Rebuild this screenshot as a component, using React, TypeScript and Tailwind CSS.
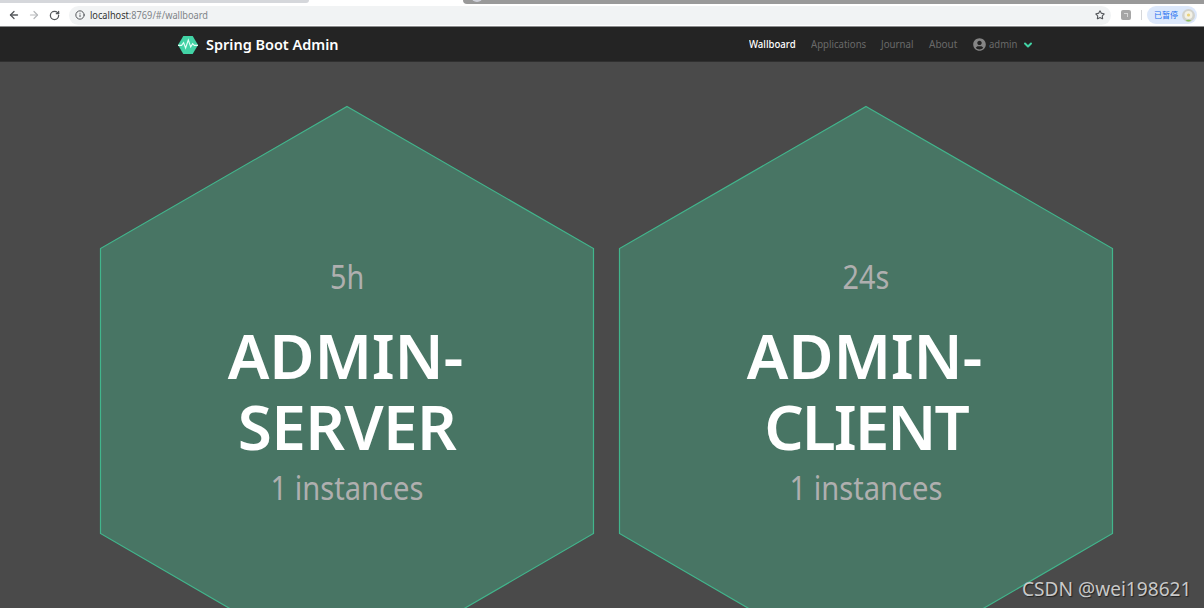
import { ArrowLeft, ArrowRight, ChevronDown, Info, RotateCw, Star } from "lucide-react";

type Application = {
  uptime: string;
  name: string[];
  tracking: string[];
  instances: string;
};

const applications: Application[] = [
  {
    uptime: "5h",
    name: ["ADMIN-", "SERVER"],
    tracking: ["tracking-[-0.2px] -ml-[3px]", "tracking-[-0.6px]"],
    instances: "1 instances",
  },
  {
    uptime: "24s",
    name: ["ADMIN-", "CLIENT"],
    tracking: ["tracking-[-0.2px] -ml-[3px]", "tracking-[-2px]"],
    instances: "1 instances",
  },
];

function BrowserBar() {
  return (
    <div className="h-[27px] shrink-0 bg-white border-b border-[#8b8c8d] flex flex-col">
      <div className="h-1 flex">
        <div className="w-[309px] h-[3px] bg-[#d5d7db] rounded-br" />
        <div className="w-[154px]" />
        <div className="flex-1 h-1 bg-[#999] rounded-bl overflow-hidden pl-2">
          <div className="w-3 h-3 -mt-2.5 rounded-full bg-[#ced0d8]" />
        </div>
      </div>
      <div className="flex-1 flex items-center text-[#55585c]">
        <ArrowLeft className="ml-2 size-3" strokeWidth={2.6} />
        <ArrowRight className="ml-2 size-3 text-[#b5b7ba]" strokeWidth={2.4} />
        <RotateCw className="ml-[9px] size-[11px]" strokeWidth={2.8} />
        <div className="ml-[9px] w-[1042px] h-[19px] rounded-full bg-[#f1f3f4] flex items-center pl-1.5 pr-1.5">
          <Info className="size-2.5" strokeWidth={2.4} />
          <span className="ml-[5px] text-[10px] leading-none text-[#808488] origin-left scale-x-[0.92]">
            <span className="text-[#333]">localhost</span>:8769/#/wallboard
          </span>
          <Star className="ml-auto size-2.5" strokeWidth={2.6} />
        </div>
        <div className="ml-2.5 size-2.5 rounded-xs bg-[#a6a6a6] flex items-center justify-center">
          <div className="size-1 border-t border-r border-[#d8d8d8]" />
        </div>
        <div className="ml-[10px] w-px h-2.5 bg-[#d5d7da]" />
        <div className="ml-[5px] w-[50px] h-[18px] rounded-full bg-[#dce8fb] flex items-center pl-[7px]">
          <span className="text-[8px] leading-none text-[#1a6ff0] w-[24px] whitespace-nowrap">已暂停</span>
          <svg className="ml-1 size-[13px]" viewBox="0 0 13 13">
            <circle cx="6.5" cy="6.5" r="6.5" fill="#d1d2cd" />
            <circle cx="6.5" cy="6" r="4" fill="#f3f1e5" />
            <circle cx="6.5" cy="6" r="1.6" fill="#ead27a" />
            <path d="M3.5 11.7q3-1.7 6 0-3 1.4-6 0z" fill="#8cc05f" />
          </svg>
        </div>
      </div>
    </div>
  );
}

function Navbar() {
  return (
    <nav className="h-[35px] shrink-0 bg-[#242424] border-b border-[#303030] flex items-center pt-px text-[#6a6a6a] text-[10px]">
      <svg className="ml-[178px] w-5 h-[18px]" viewBox="0 0 20 18">
        <path d="M5.3 0h9.4L20 9l-5.3 9H5.3L0 9z" fill="#42d3a5" />
        <path
          d="M0 9.4h3.600l2-2.800 2 5.400L10.300 4l2.400 7 1.900-3.300 1.700 1.700H20"
          fill="none"
          stroke="#e4fff6"
          strokeWidth="1.1"
        />
      </svg>
      <span className="ml-2 w-[543px] text-[15px] leading-none font-semibold text-white whitespace-nowrap origin-left scale-x-[0.965]">
        Spring Boot Admin
      </span>
      <span className="w-[62px] text-white font-medium origin-left scale-x-[0.96]">Wallboard</span>
      <span className="w-[70px] origin-left scale-x-[0.96]">Applications</span>
      <span className="w-[48px] origin-left scale-x-[0.97]">Journal</span>
      <span className="w-[44px]">About</span>
      <svg className="size-[13px]" viewBox="0 0 496 512" fill="#858585">
        <path d="M248 8C111 8 0 119 0 256s111 248 248 248 248-111 248-248S385 8 248 8zm0 96c48.600 0 88 39.400 88 88s-39.400 88-88 88-88-39.400-88-88 39.400-88 88-88zm0 344c-58.700 0-111.300-26.600-146.500-68.200 18.800-35.400 55.600-59.800 98.500-59.800 2.400 0 4.800.4 7.100 1.100 13 4.200 26.600 6.900 40.900 6.900s28-2.700 40.900-6.900c2.300-.7 4.700-1.100 7.100-1.100 42.900 0 79.700 24.400 98.500 59.800C359.300 421.400 306.700 448 248 448z" />
      </svg>
      <span className="ml-[3px] w-[34px] origin-left scale-x-[0.95]">admin</span>
      <ChevronDown className="size-3 -ml-px text-[#42d3a5]" strokeWidth={4} />
    </nav>
  );
}

function HexagonTile({ app }: { app: Application }) {
  return (
    <div className="relative w-[494px] h-[571px] shrink-0">
      <svg className="absolute inset-0 overflow-visible" width="494" height="571" viewBox="0 0 494 571">
        <path
          d="M247 .5 493.500 142.500V427.500L247 570.500.5 427.500V142.500z"
          fill="#487564"
          stroke="#42b58c"
          strokeWidth="1.2"
        />
      </svg>
      <div className="relative flex flex-col items-center pt-[149px] text-[#afafaf] text-[32px] leading-[44px]">
        <span className="scale-x-[0.9]">{app.uptime}</span>
        <h2 className="mt-[21px] flex flex-col items-center text-[62px] leading-[71px] font-semibold text-white">
          {app.name.map((line, i) => (
            <span key={line} className={app.tracking[i]}>
              {line}
            </span>
          ))}
        </h2>
        <span className="mt-1 scale-x-[0.91]">{app.instances}</span>
      </div>
    </div>
  );
}

export default function App() {
  return (
    <div className="w-full h-screen overflow-hidden bg-[#4a4a4a] flex flex-col font-['Noto_Sans','Noto_Sans_CJK_SC',sans-serif]">
      <BrowserBar />
      <Navbar />
      <main className="flex-1 min-h-0 overflow-hidden flex items-start gap-[25px] pt-11 pl-[100px]">
        {applications.map((app) => (
          <HexagonTile key={app.name.join("")} app={app} />
        ))}
      </main>
      <div className="absolute left-[1022px] top-[576px] text-[20px] leading-[26px] text-[#c9c9c9] whitespace-nowrap origin-left scale-x-[0.955] [text-shadow:1px_1px_1px_#222]">
        CSDN @wei198621
      </div>
    </div>
  );
}
